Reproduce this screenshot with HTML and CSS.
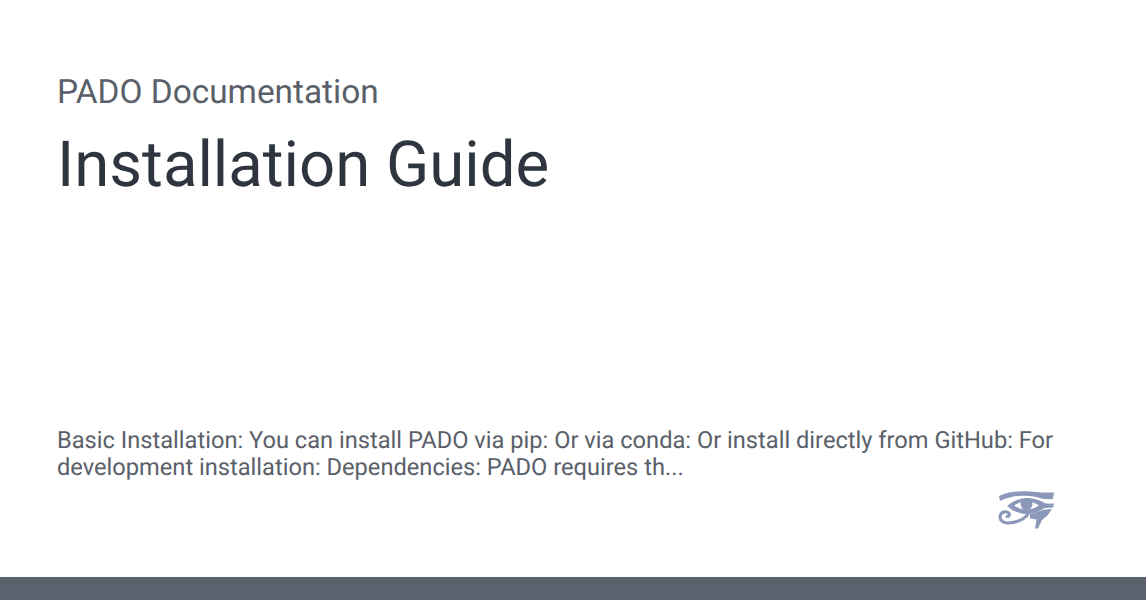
FILE: index.html
```html
<!DOCTYPE html>
<html lang="en">
<head>
<meta charset="utf-8">
<title>Installation Guide</title>
<link rel="stylesheet" href="styles.css">
</head>
<body>
<main class="card">
  <header class="head">
    <p class="site">PADO Documentation</p>
    <h1 class="title">Installation Guide</h1>
  </header>
  <div class="foot">
    <p class="desc">Basic Installation: You can install PADO via pip: Or via conda: Or install directly from GitHub: For development installation: Dependencies: PADO requires th...</p>
    <div class="logo-row">
      <svg class="logo" viewBox="0 0 56 40" width="56" height="40" aria-hidden="true">
        <path class="f" d="M1 6 C10 1.500 22 0.500 32 1.500 C40 2.500 48 2.500 56 2.500 L55 9 C47 9.500 42 8.500 36 6.500 C25 4.500 12 6 2 11 Z"/>
        <path class="f" fill-rule="evenodd" d="M9 16 C16 10 24 8 29 8 C36 8 43 10.500 48 13.500 L56 13.500 L55 17.500 L47 18 C40 22 34 24 28 24 C21 24 15 21 9 16 Z M16 15.500 C20 18 24 19.500 28 19.500 C33 19.500 37 18 41 15.500 C37 13 33 11.500 28 11.500 C24 11.500 20 13 16 15.500 Z"/>
        <circle class="f" cx="28.500" cy="14" r="6"/>
        <path class="f" d="M32 24 L47 19.500 L54 19 L50.500 24 L48.500 26.500 L44 30 L40 38.500 L37 38.500 L38.500 29.500 L32 28.500 Z"/>
        <path class="s" d="M30 24 C27 29 18 33 10 33 C4 33 1 29 2.500 25 C4 21 9 21 11 23.500 C12 25 11 26.500 9 26.500"/>
      </svg>
    </div>
  </div>
</main>
<div class="bar"></div>
</body>
</html>
```
FILE: styles.css
```css
html, body {
  margin: 0;
  padding: 0;
  height: 100%;
  overflow: hidden;
  background: #fff;
}
body {
  display: flex;
  flex-direction: column;
  font-family: Roboto, "Liberation Sans", sans-serif;
  text-rendering: geometricPrecision;
}
.card {
  flex: 1;
  display: flex;
  flex-direction: column;
  justify-content: space-between;
  padding: 74px 88px 47px 57px;
}
.site {
  margin: 0;
  font-size: 33.400px;
  line-height: 38px;
  color: #5a6069;
}
.title {
  margin: 15px 0 0;
  font-size: 63.500px;
  line-height: 75px;
  font-weight: 400;
  color: #2e353f;
}
.desc {
  margin: 0;
  font-size: 23.650px;
  line-height: 27px;
  color: #5a6069;
}
.logo-row {
  display: flex;
  justify-content: flex-end;
  margin-top: 9px;
  margin-right: 4px;
}
.logo {
  display: block;
  filter: blur(0.4px);
}
.f { fill: #8b98b9; }
.s { fill: none; stroke: #8b98b9; stroke-width: 3.200; stroke-linecap: round; }
.bar {
  height: 23px;
  background: #5a626d;
}
```
